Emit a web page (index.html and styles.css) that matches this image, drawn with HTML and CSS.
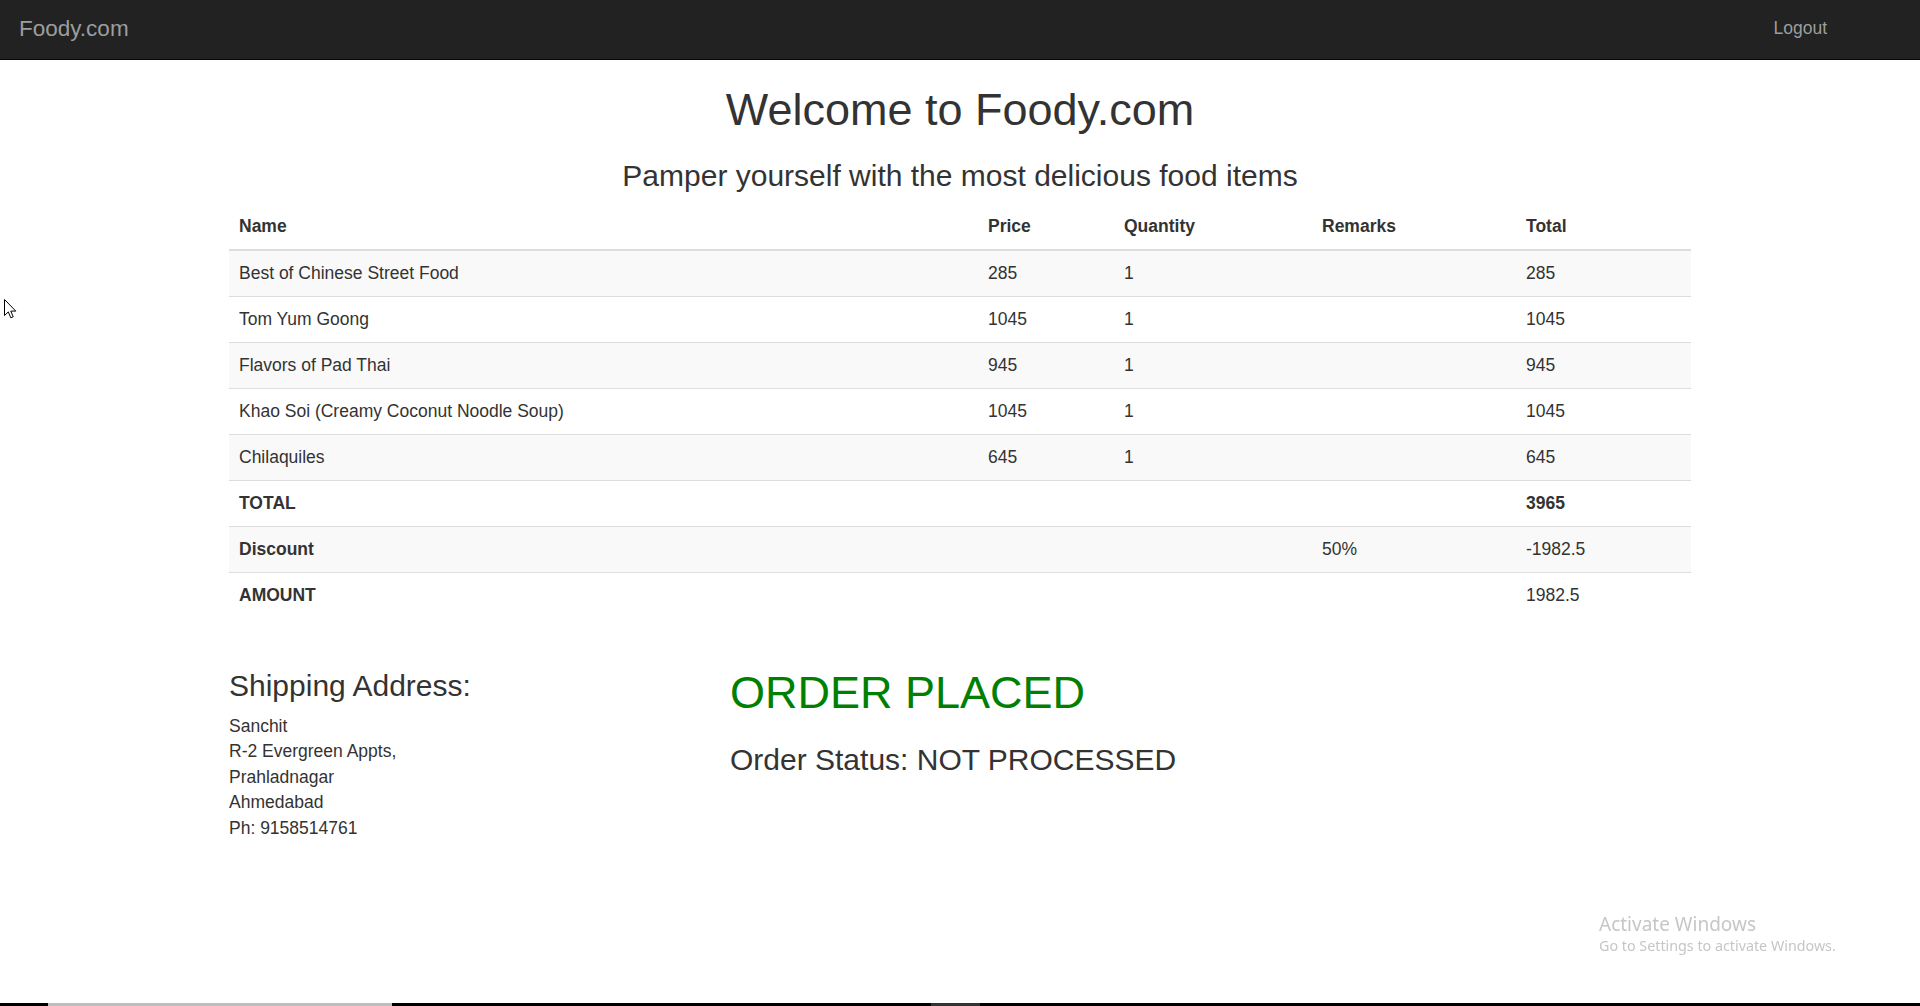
FILE: index.html
```html
<!DOCTYPE html>
<html lang="en">
<head>
<meta charset="utf-8">
<title>Foody.com</title>
<link rel="stylesheet" href="styles.css">
</head>
<body>
<nav class="navbar">
  <a class="brand" href="#">Foody.com</a>
  <a class="nav-link" href="#">Logout</a>
</nav>

<main class="container">
  <h1 class="title">Welcome to Foody.com</h1>
  <h3 class="subtitle">Pamper yourself with the most delicious food items</h3>

  <table class="order-table">
    <colgroup>
      <col class="c-name"><col class="c-price"><col class="c-qty"><col class="c-rem"><col class="c-total">
    </colgroup>
    <thead>
      <tr><th>Name</th><th>Price</th><th>Quantity</th><th>Remarks</th><th>Total</th></tr>
    </thead>
    <tbody>
      <tr><td>Best of Chinese Street Food</td><td>285</td><td>1</td><td></td><td>285</td></tr>
      <tr><td>Tom Yum Goong</td><td>1045</td><td>1</td><td></td><td>1045</td></tr>
      <tr><td>Flavors of Pad Thai</td><td>945</td><td>1</td><td></td><td>945</td></tr>
      <tr><td>Khao Soi (Creamy Coconut Noodle Soup)</td><td>1045</td><td>1</td><td></td><td>1045</td></tr>
      <tr><td>Chilaquiles</td><td>645</td><td>1</td><td></td><td>645</td></tr>
      <tr><td class="b">TOTAL</td><td></td><td></td><td></td><td class="b">3965</td></tr>
      <tr><td class="b">Discount</td><td></td><td></td><td>50%</td><td>-1982.5</td></tr>
      <tr><td class="b">AMOUNT</td><td></td><td></td><td></td><td>1982.5</td></tr>
    </tbody>
  </table>

  <div class="bottom">
    <section class="ship">
      <h3 class="ship-title">Shipping Address:</h3>
      <p class="addr">Sanchit<br>R-2 Evergreen Appts,<br>Prahladnagar<br>Ahmedabad<br>Ph: 9158514761</p>
    </section>
    <section class="status">
      <h1 class="placed">ORDER PLACED</h1>
      <h3 class="order-status">Order Status: NOT PROCESSED</h3>
    </section>
  </div>
</main>

<svg class="cursor" width="13" height="20" viewBox="0 0 13 20">
  <path d="M0.5 0.5 L0.5 16.5 L4.3 12.9 L6.8 18.8 L9.2 17.8 L6.8 12.1 L11.8 12.1 Z" fill="#fff" stroke="#000" stroke-width="1" stroke-linejoin="miter"/>
</svg>

<div class="watermark">
  <div class="wm-1">Activate Windows</div>
  <div class="wm-2">Go to Settings to activate Windows.</div>
</div>

<div class="taskbar-edge">
  <span class="seg seg-a"></span>
  <span class="seg seg-b"></span>
</div>
</body>
</html>
```

FILE: styles.css
```css
html, body {
  margin: 0;
  padding: 0;
}
body {
  font-family: "Liberation Sans", Arial, Helvetica, sans-serif;
  font-size: 17.5px;
  line-height: 25px;
  color: #333;
  background: #fff;
  min-height: 1006px;
  position: relative;
}

/* navbar */
.navbar {
  background: #222;
  border-bottom: 1px solid #080808;
  display: flex;
  justify-content: space-between;
  align-items: flex-start;
  padding: 15.5px 93px 0 19px;
  box-sizing: border-box;
  height: 60px;
}
.brand {
  color: #9d9d9d;
  text-decoration: none;
  font-size: 22.5px;
  line-height: 25px;
}
.nav-link {
  color: #9d9d9d;
  text-decoration: none;
  font-size: 17.5px;
  line-height: 25px;
}

/* container */
.container {
  width: 1462px;
  margin: 0 auto;
}
.title {
  margin: 25px 0 12px;
  font-size: 45px;
  line-height: 50px;
  font-weight: normal;
  text-align: center;
  color: #333;
}
.subtitle {
  margin: 24px 0 12px;
  font-size: 30px;
  line-height: 33px;
  font-weight: normal;
  text-align: center;
  color: #333;
}

/* table */
.order-table {
  width: 1462px;
  table-layout: fixed;
  border-collapse: separate;
  border-spacing: 0;
  margin: 0 0 25px;
}
.c-name { width: 749px; }
.c-price { width: 136px; }
.c-qty { width: 198px; }
.c-rem { width: 204px; }
.c-total { width: 175px; }
.order-table th {
  text-align: left;
  font-weight: bold;
  padding: 10px;
  height: 25px;
  border-bottom: 2px solid #ddd;
}
.order-table td {
  padding: 10px;
  height: 25px;
  border-top: 1px solid #ddd;
}
.order-table tbody tr:first-child td {
  border-top: none;
}
.order-table tbody tr:nth-child(odd) td {
  background: #f9f9f9;
}
.order-table .b {
  font-weight: bold;
}

/* bottom section */
.bottom {
  display: flex;
  align-items: flex-start;
}
.ship {
  width: 501px;
}
.ship-title {
  margin: 26px 0 12px;
  font-size: 30px;
  line-height: 33px;
  font-weight: normal;
}
.addr {
  margin: 0;
  line-height: 25.4px;
}
.status {
  flex: 1;
}
.placed {
  margin: 25px 0 0;
  font-size: 45px;
  line-height: 50px;
  font-weight: normal;
  color: #008000;
}
.order-status {
  margin: 25px 0 0;
  font-size: 30px;
  line-height: 33px;
  font-weight: normal;
}

/* overlays */
.cursor {
  position: absolute;
  left: 4px;
  top: 299px;
}
.watermark {
  position: fixed;
  left: 1599px;
  top: 912px;
  font-family: "Noto Sans", "Open Sans", sans-serif;
  color: #c6c6c6;
}
.wm-1 {
  font-size: 19px;
  line-height: 25px;
}
.wm-2 {
  font-size: 14.3px;
  line-height: 18px;
}
.taskbar-edge {
  position: fixed;
  left: 0;
  right: 0;
  bottom: 0;
  height: 3px;
  background: #000;
}
.seg {
  position: absolute;
  top: 0;
  height: 3px;
}
.seg-a {
  left: 48px;
  width: 344px;
  background: #bdbdbd;
}
.seg-b {
  left: 931px;
  width: 49px;
  background: #333;
}
```
